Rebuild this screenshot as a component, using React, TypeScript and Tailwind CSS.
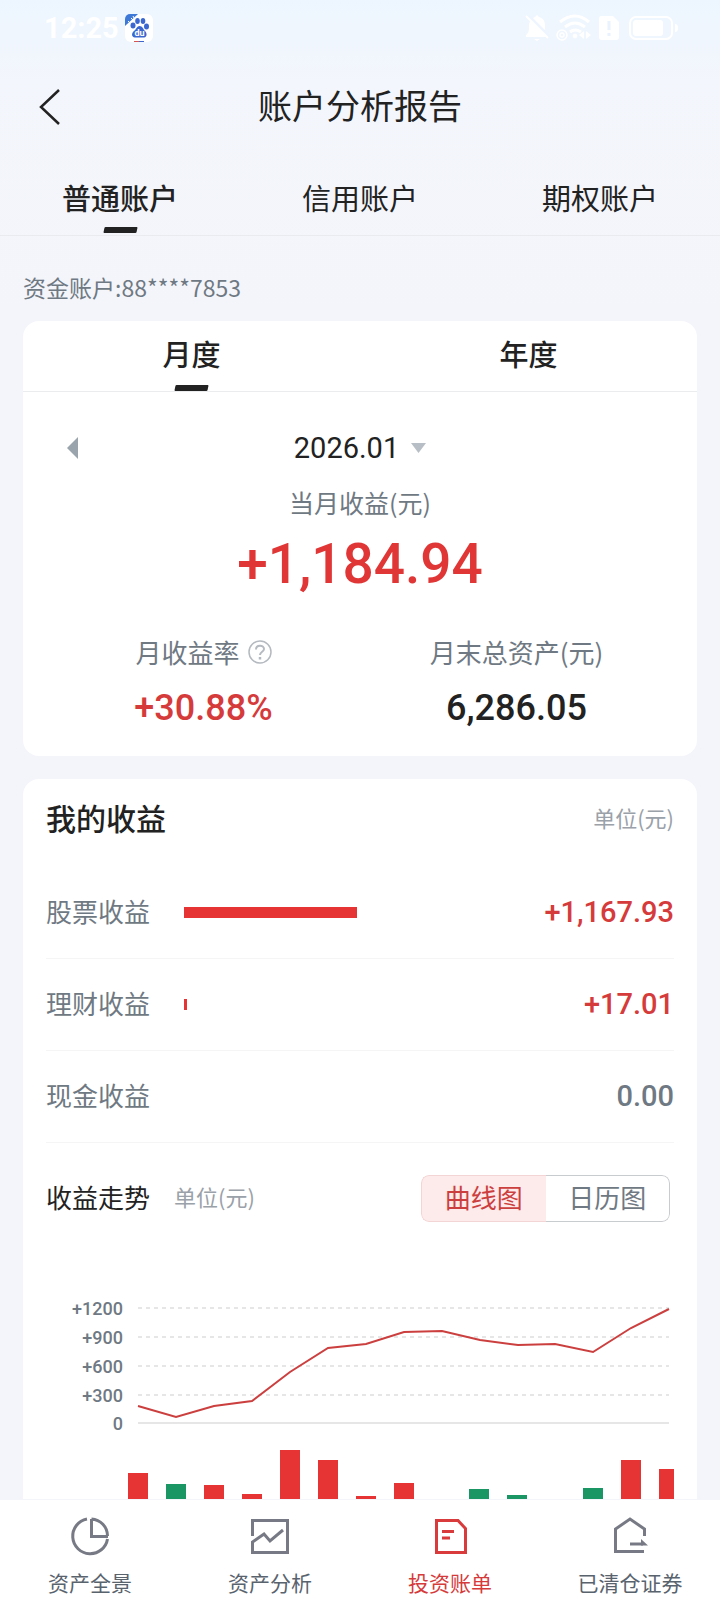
import { useState } from "react";
import type { ReactNode } from "react";

const accountTabs = ["普通账户", "信用账户", "期权账户"];

const incomeRows = [
  { label: "股票收益", value: "+1,167.93", bar: "w-[173px]", color: "text-[#d63b3b]" },
  { label: "理财收益", value: "+17.01", bar: "w-[3px]", color: "text-[#d63b3b]" },
  { label: "现金收益", value: "0.00", bar: "", color: "text-[#6f7983]" },
];

// x positions and heights are in the chart's own units (628 x 220)
const gridLines = [
  { y: 29, label: "+1200" },
  { y: 58, label: "+900" },
  { y: 87, label: "+600" },
  { y: 116, label: "+300" },
];

const linePoints =
  "92,127 130,138 168,127 206,122 244,93 282,69 320,65 358,53 396,52 434,61 472,66 509,65 547,73 585,49 623,30";

const dailyBars = [
  { x: 82, top: 194, up: true },
  { x: 120, top: 205, up: false },
  { x: 158, top: 206, up: true },
  { x: 196, top: 215, up: true },
  { x: 234, top: 171, up: true },
  { x: 272, top: 181, up: true },
  { x: 310, top: 217, up: true },
  { x: 348, top: 204, up: true },
  { x: 423, top: 210, up: false },
  { x: 461, top: 216, up: false },
  { x: 537, top: 209, up: false },
  { x: 575, top: 181, up: true },
  { x: 613, top: 190, up: true },
];

function StatusBar() {
  return (
    <div className="flex h-14 items-center justify-between pr-10 pl-11 text-white">
      <div className="flex items-center gap-[6px]">
        <span className="font-[Roboto,sans-serif] text-[29px] leading-8 font-bold">12:25</span>
        <svg className="size-7" viewBox="0 0 28 28" aria-hidden="true">
          <rect width="28" height="28" rx="6" fill="#fff" />
          <path d="M0 12V5a5 5 0 0 1 5-5h8z" fill="#3f79d8" />
          <path d="M3 7l2 2M6 4l2 2M8 2l1 2" stroke="#fff" strokeWidth="1" />
          <g fill="#3a68d0">
            <ellipse cx="8" cy="11.500" rx="2.500" ry="3" />
            <ellipse cx="12.500" cy="7" rx="2.300" ry="3" />
            <ellipse cx="18" cy="7" rx="2.300" ry="3" />
            <ellipse cx="21.500" cy="12.500" rx="2.500" ry="3" />
            <path d="M14.500 12c3 0 3.500 3 5.500 5s2.500 6-1 6.500h-9c-4-.5-3.500-4.500-1-6.500s3-5 5.500-5z" />
          </g>
          <text x="14.500" y="22" fill="#fff" fontSize="9" fontFamily="Roboto, sans-serif" fontWeight="700" textAnchor="middle">
            du
          </text>
          <path d="M9 27.500h5" stroke="#d9534f" />
          <path d="M14 27.500h5" stroke="#3a68d0" />
        </svg>
      </div>
      <svg className="h-7 w-[156px]" viewBox="0 0 156 28" fill="none" stroke="#fff" aria-hidden="true">
        <path d="M2 23v-2c3-2 3-5 3-9 0-5 3-8 6-9l2-2 2 2c4 1 6 4 6 9 0 5 0 7 3 9v2z" fill="#fff" stroke="none" />
        <path d="M4 2l21 21" stroke="#eff5fe" strokeWidth="4" />
        <path d="M2 2l22 22" strokeWidth="2" />
        <path d="M10 25h6l-3 2z" fill="#fff" stroke="none" />
        <path d="M36 8q15-12 29 0" strokeWidth="3" />
        <path d="M41 13q10-8 20 0M46 18q5-4 11 0" strokeWidth="3" />
        <circle cx="38" cy="21" r="5" strokeWidth="1.500" />
        <circle cx="38" cy="21" r="2" strokeWidth="1.500" />
        <circle cx="51" cy="22" r="2" fill="#fff" />
        <path d="M60 17v8l-5-4zM62 17v8l5-4z" fill="#fff" stroke="none" />
        <path d="M77 2h12l6 6v15q0 3-3 3H78q-3 0-3-3V5q0-3 2-3z" fill="#fff" stroke="none" />
        <path d="M85 7v9M85 19v3" stroke="#eaf3fd" strokeWidth="3" />
        <rect x="106" y="3" width="42" height="22" rx="6" strokeWidth="2" />
        <rect x="109" y="6" width="30" height="16" rx="3" fill="#fff" stroke="none" />
        <path d="M151 10q3 0 3 4t-3 4z" fill="#fff" stroke="none" />
      </svg>
    </div>
  );
}

function Underline() {
  return <span className="h-[6px] w-[33px] -skew-x-12 rounded-[1px] bg-[#222222]" />;
}

type TabProps = {
  label: string;
  active: boolean;
  bold?: boolean;
  onClick: () => void;
};

function Tab({ label, active, bold, onClick }: TabProps) {
  return (
    <button
      type="button"
      role="tab"
      aria-selected={active}
      onClick={onClick}
      className={`flex h-full flex-1 flex-col items-center justify-end text-[29px] leading-10 ${
        bold || active ? "font-medium" : ""
      }`}
    >
      <span className="flex flex-1 items-center">{label}</span>
      {active ? <Underline /> : <span className="h-[6px]" />}
    </button>
  );
}

function Summary() {
  const [period, setPeriod] = useState("月度");

  return (
    <section className="rounded-2xl bg-white pb-6">
      <div role="tablist" className="flex h-[71px] border-b border-[#ebecee]">
        {["月度", "年度"].map((p) => (
          <Tab key={p} label={p} bold active={p === period} onClick={() => setPeriod(p)} />
        ))}
      </div>

      <div className="mt-8 grid grid-cols-[1fr_auto_1fr] items-center px-11">
        <button type="button" aria-label="上个月" className="justify-self-start">
          <svg className="h-[22px] w-[11px]" viewBox="0 0 11 22" fill="#9aa4ad">
            <path d="M11 0v22L0 11z" />
          </svg>
        </button>
        <button type="button" className="flex items-center gap-3">
          <span className="font-[Roboto,sans-serif] text-[29px] leading-12">2026.01</span>
          <svg className="h-[10px] w-[15px]" viewBox="0 0 15 10" fill="#b8bec5" aria-hidden="true">
            <path d="M0 0h15L7.500 10z" />
          </svg>
        </button>
      </div>

      <p className="mt-3 text-center text-[25px] leading-9 text-[#6f7983]">当月收益(元)</p>
      <p className="mt-3 text-center font-[Roboto,sans-serif] text-[55px] leading-16 font-medium text-[#e03636]">
        +1,184.94
      </p>

      <dl className="mt-9 grid grid-cols-2 px-6 text-center">
        <div>
          <dt className="flex items-center justify-center gap-2 text-[26px] leading-10 text-[#6f7983]">
            月收益率
            <button type="button" aria-label="月收益率说明">
              <svg className="size-6" viewBox="0 0 24 24" fill="none" stroke="#b4bac0" strokeWidth="1.500">
                <circle cx="12" cy="12" r="11" />
                <path d="M8 9.500c0-5 8-5 8-.5 0 3-4 2.500-4 6" strokeWidth="2" />
                <path d="M12 17v2.500" strokeWidth="2.500" />
              </svg>
            </button>
          </dt>
          <dd className="mt-3 font-[Roboto,sans-serif] text-[36px] leading-12 font-medium text-[#d63b3b]">+30.88%</dd>
        </div>
        <div>
          <dt className="text-[26px] leading-10 text-[#6f7983]">月末总资产(元)</dt>
          <dd className="mt-3 font-[Roboto,sans-serif] text-[36px] leading-12 font-medium">6,286.05</dd>
        </div>
      </dl>
    </section>
  );
}

function TrendChart() {
  return (
    <svg className="mt-[57px] w-full" viewBox="0 0 628 220" role="img" aria-label="收益走势">
      <g fill="#6f7983" fontFamily="Roboto, sans-serif" fontSize="18" fontWeight="500" textAnchor="end">
        {gridLines.map((g) => (
          <text key={g.label} x="77" y={g.y + 7}>
            {g.label}
          </text>
        ))}
        <text x="77" y="151">
          0
        </text>
      </g>
      <g stroke="#e6e6e6" strokeWidth="2">
        {gridLines.map((g) => (
          <path key={g.y} d={`M92 ${g.y}H623`} strokeDasharray="4 4" />
        ))}
        <path d="M92 144H623" />
      </g>
      <polyline points={linePoints} fill="none" stroke="#cc3f3f" strokeWidth="2" />
      {dailyBars.map((b) => (
        <rect
          key={b.x}
          x={b.x}
          y={b.top}
          width={b.x > 608 ? 15 : 20}
          height={220 - b.top}
          fill={b.up ? "#e63333" : "#1a9664"}
        />
      ))}
    </svg>
  );
}

function Income() {
  const [view, setView] = useState("曲线图");

  return (
    <section className="mt-[23px] rounded-t-2xl bg-white px-[23px] pt-4">
      <div className="flex items-center justify-between">
        <h2 className="text-[30px] leading-11 font-medium">我的收益</h2>
        <span className="text-[22px] text-[#9aa1a9]">单位(元)</span>
      </div>

      <ul className="mt-7">
        {incomeRows.map((row) => (
          <li key={row.label} className="flex h-[92px] items-center border-b border-[#f5f5f6]">
            <span className="w-[138px] pb-1 text-[26px] text-[#6f7983]">{row.label}</span>
            <span className={`h-[11px] bg-[#e63333] ${row.bar}`} />
            <span className={`ml-auto font-[Roboto,sans-serif] text-[29px] font-medium ${row.color}`}>{row.value}</span>
          </li>
        ))}
      </ul>

      <div className="mt-8 flex items-center pr-1">
        <h3 className="pb-1 text-[26px] leading-10">收益走势</h3>
        <span className="ml-6 pb-1 text-[22px] text-[#9aa1a9]">单位(元)</span>
        <div className="ml-auto flex h-[47px] w-[249px] overflow-hidden rounded-lg text-[26px]">
          {["曲线图", "日历图"].map((v) => (
            <button
              key={v}
              type="button"
              aria-pressed={v === view}
              onClick={() => setView(v)}
              className={`flex-1 border pb-1 first:rounded-l-lg first:border-r-0 last:rounded-r-lg last:border-l-0 ${
                v === view ? "border-[#f3d5d5] bg-[#fdeaea] text-[#cc3f3f]" : "border-[#c9cccf] text-[#6f7983]"
              }`}
            >
              {v}
            </button>
          ))}
        </div>
      </div>

      <TrendChart />
    </section>
  );
}

function NavItem({ label, active, children }: { label: string; active?: boolean; children: ReactNode }) {
  return (
    <a
      href="#"
      aria-current={active ? "page" : undefined}
      className={`flex flex-1 flex-col items-center gap-[10px] ${active ? "text-[#d63b3b]" : "text-[#59636e]"}`}
    >
      <svg
        className="size-10"
        viewBox="0 0 40 40"
        fill="none"
        stroke={active ? "#d93a3c" : "#777a84"}
        strokeWidth="3"
        aria-hidden="true"
      >
        {children}
      </svg>
      <span className="text-[21px] leading-8">{label}</span>
    </a>
  );
}

function BottomNav() {
  return (
    <nav className="fixed inset-x-0 bottom-0 flex h-28 bg-white pt-4">
      <NavItem label="资产全景">
        <path d="M17 3A17.500 17.500 0 1 0 37.500 23" />
        <path d="M21.500 3v17.500H38M21.500 3A17 17 0 0 1 37.500 20" />
      </NavItem>
      <NavItem label="资产分析">
        <path d="M2.500 20V4.500h35v32h-35V26L14 18l6 7 13-11" />
      </NavItem>
      <NavItem label="投资账单" active>
        <path d="M6.500 4.500H28l7.500 8v24h-29zM12 15.500h12M12 22h8" />
      </NavItem>
      <NavItem label="已清仓证券">
        <path d="M34.500 20v-7L20 3 5.500 13v22.500H34" />
        <path d="M20 28h13" />
        <path d="M31 23l7 6.500h-7z" fill="#777a84" stroke="none" />
      </NavItem>
    </nav>
  );
}

function App() {
  const [account, setAccount] = useState(accountTabs[0]);

  return (
    <div className="min-h-screen bg-[#f4f5fa] bg-linear-to-b from-[#edf6ff] via-[#f3f6fc] via-5% to-[#f4f5fa] to-20% pb-28 font-['Noto_Sans_CJK_SC',sans-serif] text-[#222222]">
      <StatusBar />
      <header className="grid h-[102px] grid-cols-[1fr_auto_1fr] items-center px-9">
        <button type="button" aria-label="返回" className="justify-self-start">
          <svg className="h-10 w-6" viewBox="0 0 24 40" fill="none" stroke="#222222" strokeWidth="2.500">
            <path d="M23 3L5 20l18 17" />
          </svg>
        </button>
        <h1 className="pb-1 text-[34px] leading-12">账户分析报告</h1>
      </header>
      <div role="tablist" className="flex h-[78px] border-b border-[#e9ebef] pt-2 pb-[2px]">
        {accountTabs.map((t) => (
          <Tab key={t} label={t} active={t === account} onClick={() => setAccount(t)} />
        ))}
      </div>
      <main className="px-[23px]">
        <p className="pt-[33px] pb-4 text-[23px] leading-9 text-[#6f7983]">资金账户:88****7853</p>
        <Summary />
        <Income />
      </main>
      <BottomNav />
    </div>
  );
}

export default App;
